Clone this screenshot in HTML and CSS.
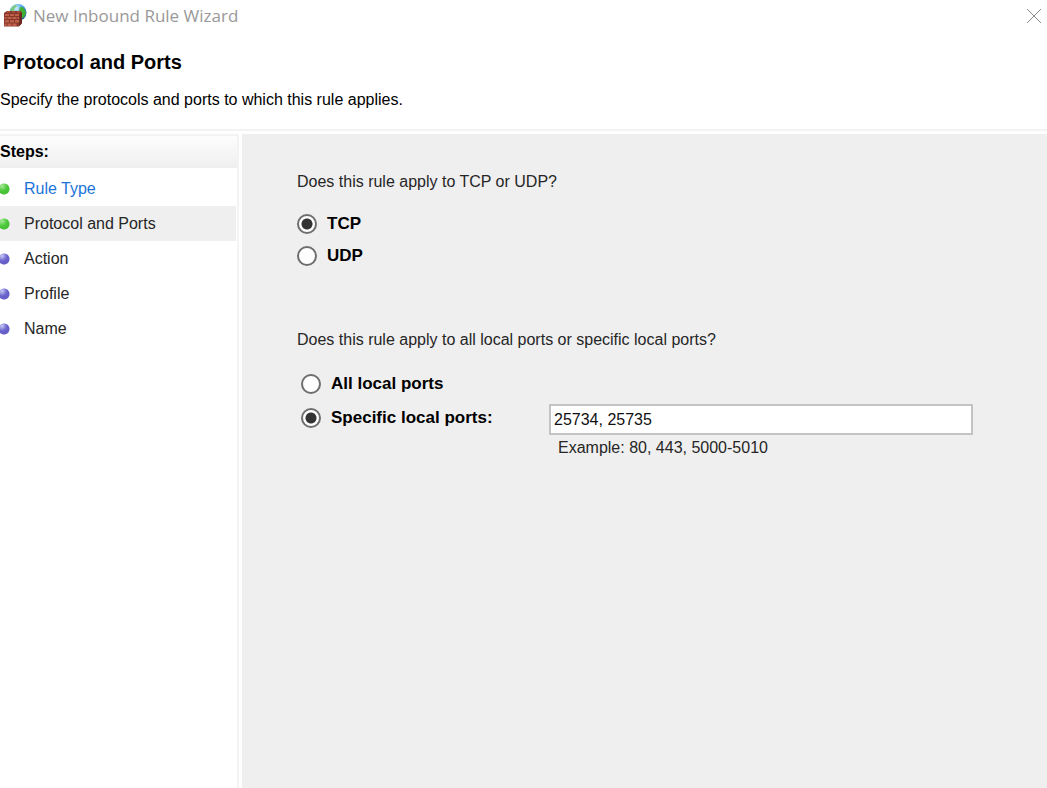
FILE: index.html
```html
<!DOCTYPE html>
<html lang="en">
<head>
<meta charset="utf-8">
<meta name="viewport" content="width=device-width, initial-scale=1">
<title>New Inbound Rule Wizard</title>
<link rel="stylesheet" href="styles.css">
</head>
<body>
<div class="window">
  <header class="titlebar">
    <svg class="app-icon" viewBox="0 0 24 24" aria-hidden="true">
      <defs>
        <radialGradient id="globe" cx=".4" cy=".25" r=".8">
          <stop offset="0" stop-color="#d4f2fd"/><stop offset=".45" stop-color="#4ba6e8"/><stop offset="1" stop-color="#123f9c"/>
        </radialGradient>
      </defs>
      <circle cx="15" cy="8.500" r="8.500" fill="url(#globe)"/>
      <path d="M7.500 6Q9.500 1.500 13 1L14 2.500L11.500 4L11 7H7.500Z" fill="#7acb74"/>
      <path d="M17 3L20.500 3.500L23 8L22 12L19.500 14.500L18 10L16 7Z" fill="#3fae32"/>
      <path d="M1 9L4 7H17.500L19 8.500V19L16 22.500H1Z" fill="#85382a"/>
      <path d="M16.500 10L19 8.500V19L16.500 22Z" fill="#6b281e"/>
      <g fill="#c0604a">
        <path d="M2 10h4v2H2zM7 10h4v2H7zM12 10h4v2h-4zM1.500 13h2v2h-2zM4.500 13h4v2h-4zM9.500 13h4v2h-4zM14.500 13H16v2h-1.500zM2 16h4v2.500H2zM7 16h4v2.500H7zM12 16h4v2.500h-4zM1.500 19.500h2V22h-2zM4.500 19.500h4V22h-4zM9.500 19.500h4V22h-4z"/>
      </g>
      <path d="M4 7h3v2H3zM9 7h3v2H9zM14 7h3v2h-3z" fill="#a84c3a"/>
    </svg>
    <span class="caption">New Inbound Rule Wizard</span>
    <button class="close" type="button" aria-label="Close">
      <svg viewBox="0 0 16 16" aria-hidden="true"><path d="M1 1L15 15M15 1L1 15"/></svg>
    </button>
  </header>
  <div class="intro">
    <h1>Protocol and Ports</h1>
    <p>Specify the protocols and ports to which this rule applies.</p>
  </div>
  <div class="body">
    <nav class="steps" aria-labelledby="steps-title">
      <h2 id="steps-title">Steps:</h2>
      <ol>
        <li class="done"><a href="#rule-type">Rule Type</a></li>
        <li class="done current" aria-current="step">Protocol and Ports</li>
        <li>Action</li>
        <li>Profile</li>
        <li>Name</li>
      </ol>
    </nav>
    <main class="page">
      <fieldset>
        <legend>Does this rule apply to TCP or UDP?</legend>
        <div class="options protocols">
          <label><input type="radio" name="protocol" checked>TCP</label>
          <label><input type="radio" name="protocol">UDP</label>
        </div>
      </fieldset>
      <fieldset>
        <legend>Does this rule apply to all local ports or specific local ports?</legend>
        <div class="options ports">
          <label class="wide"><input type="radio" name="ports">All local ports</label>
          <label><input type="radio" name="ports" checked>Specific local ports:</label>
          <div class="entry">
            <input class="field" type="text" value="25734, 25735" aria-label="Specific local ports" aria-describedby="example">
            <p id="example">Example: 80, 443, 5000-5010</p>
          </div>
        </div>
      </fieldset>
    </main>
  </div>
</div>
</body>
</html>
```
FILE: styles.css
```css
* { box-sizing: border-box; }

body {
  margin: 0;
  background: #fff;
  color: #262626;
  font-family: "Liberation Sans", Arial, sans-serif;
  font-size: 16px;
  line-height: 20px;
}

h1, h2, p, ol, fieldset, legend { margin: 0; padding: 0; }

.window {
  display: flex;
  flex-direction: column;
  min-height: 100vh;
}

.titlebar {
  display: flex;
  align-items: center;
  gap: 6px;
  height: 32px;
  padding: 0 5px 0 3px;
  color: #999;
  font-family: "Open Sans", "Noto Sans", sans-serif;
  font-size: 17px;
}

.app-icon { width: 24px; height: 24px; }

.close {
  display: flex;
  margin-left: auto;
  padding: 0;
  border: 0;
  background: none;
}

.close svg {
  width: 16px;
  height: 16px;
  fill: none;
  stroke: #8c8c8c;
}

.intro {
  padding: 18px 0 19px;
  border-bottom: 2px solid #f3f3f3;
  color: #000;
}

.intro h1 {
  padding-left: 3px;
  font-size: 20px;
  line-height: 24px;
}

.intro p { margin-top: 16px; }

.body {
  display: flex;
  flex: 1;
  gap: 3px;
  padding-top: 3px;
}

.steps {
  flex: none;
  width: 239px;
  border-top: 2px solid #f3f3f3;
  border-right: 2px solid #f3f3f3;
}

.steps h2 {
  padding: 6px 0;
  background: linear-gradient(#fdfdfd, #efefef);
  color: #000;
  font-size: 16px;
}

.steps ol {
  padding: 4px 1px 0 0;
  list-style: none;
}

.steps li {
  display: flex;
  align-items: center;
  gap: 14px;
  height: 34px;
}

.steps li + li { height: 35px; }

.steps li::before {
  content: "";
  width: 10px;
  height: 12px;
  background: radial-gradient(circle at 4px 6px, transparent 5px, #fff 6px), radial-gradient(circle at 2px 3px, #c9c9f5, #6a64cc 5px, #5b55bd);
}

.steps .done::before {
  background: radial-gradient(circle at 4px 6px, transparent 5px, #fff 6px), radial-gradient(circle at 2px 3px, #a8eb98, #4cc83a 5px, #3fb52f);
}

.steps .current::before {
  background: radial-gradient(circle at 4px 6px, transparent 5px, #efefef 6px), radial-gradient(circle at 2px 3px, #a8eb98, #4cc83a 5px, #3fb52f);
}

.steps .current { background: #efefef; }

.steps a {
  color: #1c74d8;
  text-decoration: none;
}

.page {
  flex: 1;
  padding: 38px 74px 38px 55px;
  background: #efefef;
}

fieldset {
  min-width: 0;
  border: 0;
}

fieldset + fieldset { margin-top: 64px; }

.options { padding-top: 22px; }

.protocols {
  display: grid;
  gap: 12px;
}

.ports {
  display: grid;
  grid-template-columns: 248px 1fr;
  align-items: start;
  padding: 20px 0 0 4px;
}

.ports .wide {
  grid-column: 1 / -1;
  margin-bottom: 7px;
}

label {
  display: flex;
  align-items: center;
  gap: 10px;
  color: #000;
  font-size: 17px;
  font-weight: bold;
}

input[type="radio"] {
  appearance: none;
  width: 20px;
  height: 20px;
  margin: 0;
  border: 2px solid #6e6e6e;
  border-radius: 50%;
  background: #fff;
}

input[type="radio"]:checked {
  background: radial-gradient(circle, #333 5px, #fff 6px);
}

.ports label { min-height: 27px; }

.field {
  display: block;
  width: 100%;
  height: 31px;
  padding: 0 3px;
  border: 2px solid #c3c3c3;
  background: #fff;
  color: #111;
  font: inherit;
}

.entry p { padding: 3px 0 0 9px; }
```
